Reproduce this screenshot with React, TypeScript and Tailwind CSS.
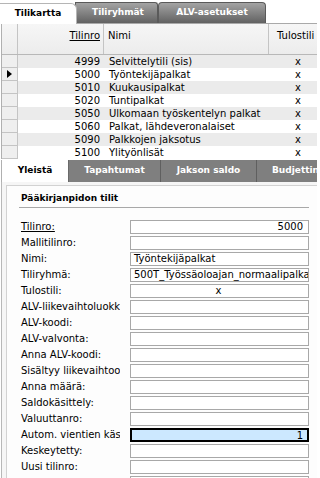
import React from 'react';

const rows = [
  ['4999', 'Selvittelytili (sis)'],
  ['5000', 'Työntekijäpalkat'],
  ['5010', 'Kuukausipalkat'],
  ['5020', 'Tuntipalkat'],
  ['5050', 'Ulkomaan työskentelyn palkat'],
  ['5060', 'Palkat, lähdeveronalaiset'],
  ['5090', 'Palkkojen jaksotus'],
  ['5100', 'Ylityönlisät'],
];

type Field = {
  label: string;
  value?: string;
  align?: 'left' | 'right' | 'center';
  underline?: boolean;
  active?: boolean;
};

const fields: Field[] = [
  { label: 'Tilinro:', value: '5000', align: 'right', underline: true },
  { label: 'Mallitilinro:' },
  { label: 'Nimi:', value: 'Työntekijäpalkat' },
  { label: 'Tiliryhmä:', value: '500T_Työssäoloajan_normaalipalkat' },
  { label: 'Tulostili:', value: 'x', align: 'center' },
  { label: 'ALV-liikevaihtoluokka:' },
  { label: 'ALV-koodi:' },
  { label: 'ALV-valvonta:' },
  { label: 'Anna ALV-koodi:' },
  { label: 'Sisältyy liikevaihtoon:' },
  { label: 'Anna määrä:' },
  { label: 'Saldokäsittely:' },
  { label: 'Valuuttanro:' },
  { label: 'Autom. vientien käsittely:', value: '1', align: 'right', active: true },
  { label: 'Keskeytetty:' },
  { label: 'Uusi tilinro:' },
  { label: '' },
];

export default function App() {
  return (
    <div className="w-[317px] h-[478px] overflow-hidden bg-white font-['DejaVu_Sans',sans-serif] text-[10px] text-black select-none">
      {/* Top tabs */}
      <div className="flex items-end h-[24px] pt-[3px] border-b border-[#a9a9a9]">
        <div className="relative z-10 w-[77px] h-[21px] -mb-px bg-white border-t border-r border-[#b5b5b5] rounded-tr-[6px] flex items-center justify-center font-bold text-[9px]">
          Tilikartta
        </div>
        <div className="-ml-[2px] w-[83px] h-[21px] bg-gradient-to-b from-[#a4a4a4] to-[#626262] border border-[#5a5a5a] border-b-0 rounded-tr-[3px] flex items-center justify-center pl-[3px] font-bold text-[9px] text-white">
          Tiliryhmät
        </div>
        <div className="w-[108px] h-[21px] bg-gradient-to-b from-[#a4a4a4] to-[#626262] border border-[#5a5a5a] border-b-0 rounded-t-[4px] flex items-center justify-center font-bold text-[9px] text-white">
          ALV-asetukset
        </div>
      </div>

      {/* Grid */}
      <div className="ml-px border-l border-[#b0b0b0]">
        <div className="flex h-[31px] bg-gradient-to-b from-[#f6f6f6] to-[#ececec] border-b border-[#b8b8b8]">
          <div className="w-[16px] shrink-0 border-r border-[#c4c4c4]" />
          <div className="w-[86px] shrink-0 border-r border-[#c4c4c4] pt-[4px] pr-[3px] text-right">
            <span className="underline">Tilinro</span>
          </div>
          <div className="w-[165px] shrink-0 border-r border-[#c4c4c4] pt-[4px] pl-[4px]">Nimi</div>
          <div className="flex-1 pt-[4px] pl-[8px] whitespace-nowrap overflow-hidden">Tulostili</div>
        </div>
        {rows.map(([no, name], i) => (
          <div
            key={no}
            className={`flex h-[13px] leading-[13px] ${i % 2 === 0 ? 'bg-[#ebebeb]' : 'bg-white'}`}
          >
            <div className="w-[16px] shrink-0 bg-[#efefef] border-r border-b border-[#c4c4c4] flex items-center justify-center">
              {no === '5000' && (
                <svg width="5" height="8" viewBox="0 0 5 8">
                  <path d="M0 0 L5 4 L0 8 Z" fill="#000" />
                </svg>
              )}
            </div>
            <div className="w-[86px] shrink-0 pr-[4px] text-right">{no}</div>
            <div className="w-[165px] shrink-0 pl-[5px] whitespace-nowrap overflow-hidden">{name}</div>
            <div className="w-[58px] shrink-0 text-center">x</div>
          </div>
        ))}
      </div>

      {/* Bottom tabs */}
      <div className="flex h-[22px] mt-px">
        <div className="w-[67px] h-full bg-white border-l border-[#b0b0b0] ml-px flex items-center justify-center font-bold text-[9px]">
          Yleistä
        </div>
        <div className="flex flex-1 bg-[#7f7f7f] font-bold text-[9px] text-white whitespace-nowrap overflow-hidden">
          <div className="w-[93px] shrink-0 flex items-center justify-center border-r border-[#5f5f5f] border-l border-l-[#6a6a6a]">
            Tapahtumat
          </div>
          <div className="w-[96px] shrink-0 flex items-center justify-center border-r border-[#5f5f5f]">
            Jakson saldo
          </div>
          <div className="w-[90px] shrink-0 flex items-center pl-[15px]">Budjettinäkymä</div>
        </div>
      </div>

      {/* Panel */}
      <div className="ml-px border-l border-[#b8b8b8] bg-[#f6f6f6] pt-[3px] pl-[4px] h-[300px]">
        <div className="bg-[#fdfdfd] border-t border-l border-[#d2d2d2] h-full pl-[12px]">
          <div className="mt-[6px] w-[290px] h-[16px] leading-[12px] border-b border-[#a8a8a8] pl-[2px] font-bold text-[9px]">
            Pääkirjanpidon tilit
          </div>
          <div className="mt-[12px] flex flex-col gap-[2px]">
            {fields.map((f, i) => (
              <div key={i} className="flex items-center h-[14px]">
                <div className="w-[101px] shrink-0 pl-[2px] whitespace-nowrap overflow-hidden leading-[14px]">
                  <span className={f.underline ? 'underline' : ''}>{f.label}</span>
                </div>
                <div
                  className={`ml-[10px] w-[179px] h-[14px] shrink-0 whitespace-nowrap overflow-hidden leading-[12px] ${
                    f.active
                      ? 'border-2 border-black bg-[#cce8ff] leading-[10px] pr-[4px]'
                      : 'border border-[#a8a8a8] bg-white pr-[5px]'
                  } pl-[3px] ${
                    f.align === 'right' ? 'text-right' : f.align === 'center' ? 'text-center' : 'text-left'
                  }`}
                >
                  {f.value}
                </div>
              </div>
            ))}
          </div>
        </div>
      </div>
    </div>
  );
}
